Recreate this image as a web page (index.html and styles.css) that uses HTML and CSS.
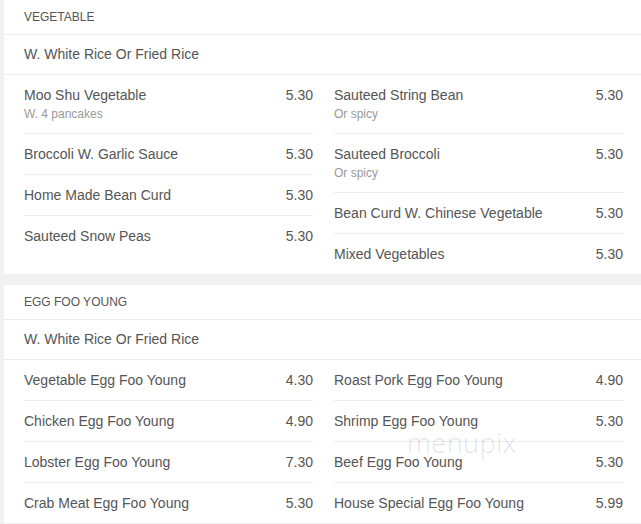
FILE: index.html
```html
<!DOCTYPE html>
<html>
<head>
<meta charset="utf-8">
<link rel="stylesheet" href="styles.css">
</head>
<body>
<div class="page">
  <section class="card">
    <div class="cat">VEGETABLE</div>
    <div class="note">W. White Rice Or Fried Rice</div>
    <div class="cols">
      <div class="col">
        <div class="item"><div class="line"><span>Moo Shu Vegetable</span><span>5.30</span></div><div class="sub">W. 4 pancakes</div></div>
        <div class="item"><div class="line"><span>Broccoli W. Garlic Sauce</span><span>5.30</span></div></div>
        <div class="item"><div class="line"><span>Home Made Bean Curd</span><span>5.30</span></div></div>
        <div class="item"><div class="line"><span>Sauteed Snow Peas</span><span>5.30</span></div></div>
      </div>
      <div class="col">
        <div class="item"><div class="line"><span>Sauteed String Bean</span><span>5.30</span></div><div class="sub">Or spicy</div></div>
        <div class="item"><div class="line"><span>Sauteed Broccoli</span><span>5.30</span></div><div class="sub">Or spicy</div></div>
        <div class="item"><div class="line"><span>Bean Curd W. Chinese Vegetable</span><span>5.30</span></div></div>
        <div class="item"><div class="line"><span>Mixed Vegetables</span><span>5.30</span></div></div>
      </div>
    </div>
  </section>
  <section class="card">
    <div class="cat">EGG FOO YOUNG</div>
    <div class="note">W. White Rice Or Fried Rice</div>
    <div class="cols">
      <div class="col">
        <div class="item"><div class="line"><span>Vegetable Egg Foo Young</span><span>4.30</span></div></div>
        <div class="item"><div class="line"><span>Chicken Egg Foo Young</span><span>4.90</span></div></div>
        <div class="item"><div class="line"><span>Lobster Egg Foo Young</span><span>7.30</span></div></div>
        <div class="item"><div class="line"><span>Crab Meat Egg Foo Young</span><span>5.30</span></div></div>
      </div>
      <div class="col">
        <div class="item"><div class="line"><span>Roast Pork Egg Foo Young</span><span>4.90</span></div></div>
        <div class="item"><div class="line"><span>Shrimp Egg Foo Young</span><span>5.30</span></div></div>
        <div class="item"><div class="line"><span>Beef Egg Foo Young</span><span>5.30</span></div></div>
        <div class="item"><div class="line"><span>House Special Egg Foo Young</span><span>5.99</span></div></div>
      </div>
    </div>
  </section>
  <div class="watermark">menupix</div>
</div>
</body>
</html>
```
FILE: styles.css
```css
html, body {
  margin: 0;
  padding: 0;
  overflow: hidden;
  background: #f1f1f3;
}
body {
  font-family: "Liberation Sans", Arial, sans-serif;
  color: #555;
  width: 641px;
  height: 524px;
}
.page {
  position: relative;
  padding-left: 4px;
}
.card {
  background: #fff;
  width: 639px;
  margin-bottom: 11px;
}
.cat {
  height: 34px;
  line-height: 34px;
  padding: 0 20px;
  font-size: 12px;
  color: #555;
  border-bottom: 1px solid #ececee;
}
.note {
  height: 39px;
  line-height: 39px;
  padding: 0 20px;
  font-size: 14px;
  border-bottom: 1px solid #ececee;
}
.cols {
  display: grid;
  grid-template-columns: 289px 289px;
  column-gap: 21px;
  padding: 0 20px;
}
.item {
  padding: 10px 0;
  border-bottom: 1px solid #ececee;
}
.item:last-child {
  border-bottom: none;
}
.line {
  display: flex;
  justify-content: space-between;
  font-size: 14px;
  line-height: 20px;
}
.sub {
  font-size: 12px;
  line-height: 18px;
  color: #999;
}
.watermark {
  position: absolute;
  left: 407px;
  top: 424px;
  font-size: 27px;
  font-weight: 300;
  font-family: "Open Sans", sans-serif;
  color: rgba(0, 0, 0, 0.13);
  letter-spacing: 0.5px;
}
```
